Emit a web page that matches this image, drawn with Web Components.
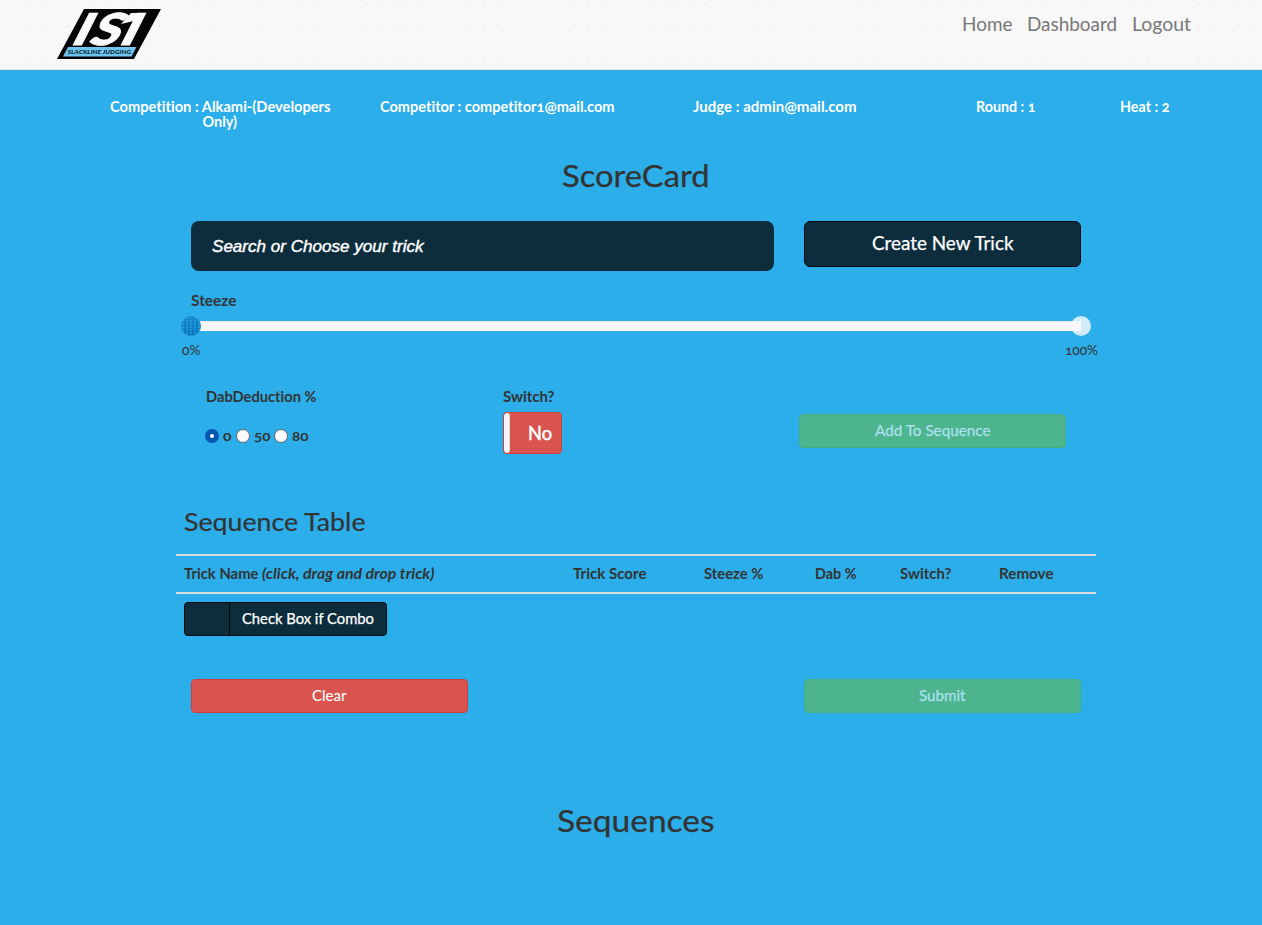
<!DOCTYPE html>
<html lang="en">
<head>
<meta charset="utf-8">
<title>ScoreCard</title>
<style>
body{margin:0;background:#2baee9;font-family:Lato,"Liberation Sans",sans-serif;font-size:14px;line-height:20px;color:#333;font-variant-numeric:oldstyle-nums;font-variant-ligatures:none}
</style>
</head>
<body>
<score-app></score-app>
<script>
function define(name, html, init) {
  const tpl = document.createElement('template');
  tpl.innerHTML = html;
  customElements.define(name, class extends HTMLElement {
    connectedCallback() {
      if (this.shadowRoot) return;
      this.attachShadow({ mode: 'open' }).append(tpl.content.cloneNode(true));
      if (init) init.call(this, this.shadowRoot);
    }
  });
}

/* A run of text widened so that it fills the width given in "w". */
define('track-text', `<style>:host{display:inline-block;white-space:nowrap;text-align:left}span{display:inline-block;font-size:1.03em;transform-origin:0 50%}</style><span><slot></slot></span>`, function (root) {
  const s = root.querySelector('span');
  const w = Number(this.getAttribute('w')) - 0.5;
  const own = s.getBoundingClientRect().width;
  s.style.transform = 'translateY(.4px) scaleX(' + w / own + ')';
  s.style.marginRight = (w - own) + 'px';
});

define('isi-logo', `<style>:host{display:block;width:104px;height:51px}svg{display:block;overflow:visible}
text{font-family:Lato,sans-serif;font-weight:900}</style>
<svg width="104" height="51" viewBox="57 8 104 51">
<path d="M84 9h77l-27 50H57z" fill="#030506"/>
<path d="M68 47h68.5l-5 9.5H63z" fill="#6ec6f0"/>
<g fill="#fafafa" stroke="#fafafa" stroke-width=".8" font-size="44" transform="translate(0 45.2) skewX(-27)">
<text transform="translate(69 0) scale(1.25 1)">I</text>
<text transform="translate(87 0) scale(1.2 1)">S</text>
<text transform="translate(117 0) scale(1.25 1)">I</text></g>
<path d="M131 13h12l-5 7-17 4z" fill="#fafafa"/>
<text x="67.5" y="54.2" font-size="6.4" font-style="italic" fill="#0a2733" textLength="63.5" lengthAdjust="spacingAndGlyphs">SLACKLINE JUDGING</text>
</svg>`);

define('top-bar', `<style>
:host{display:flex;justify-content:space-between;box-sizing:border-box;height:70px;padding:8px 71px 0 57px;border-bottom:1px solid #e7e7e7;
background:radial-gradient(circle at 3px 4px,#ededf6 .6px,transparent 1px) 0 0/13px 11px,radial-gradient(circle at 5px 2px,#f3f2ee .6px,transparent 1px) 4px 3px/17px 13px,#f8f8f8}
nav{display:flex;gap:15px;padding-top:6px;font-size:18px;color:#777}
</style><isi-logo></isi-logo><nav><track-text w="51">Home</track-text><track-text w="90.5">Dashboard</track-text><track-text w="59.5">Logout</track-text></nav>`);

define('info-bar', `<style>
:host{display:grid;grid-template-columns:3fr 3fr 3fr 2fr 1fr;width:1110px;margin-left:81px;padding-top:29px;height:46px;text-align:center;color:#fff;font-weight:700;font-size:14px;line-height:15px}
</style><div><track-text w="221">Competition : Alkami-(Developers</track-text><br><track-text w="35">Only)</track-text></div>
<div><track-text w="235">Competitor : competitor1@mail.com</track-text></div>
<div><track-text w="164">Judge : admin@mail.com</track-text></div>
<div><track-text w="60">Round : 1</track-text></div>
<div><track-text w="50">Heat : 2</track-text></div>`);

define('action-button', `<style>
:host{display:flex;align-items:center;justify-content:center;box-sizing:border-box;height:34px;border:1px solid;border-radius:4px;color:#fff;-webkit-text-stroke:.25px;font-size:14px}
:host([kind=dark]){background:#0d2d3d;border-color:#02090d}
:host([kind=danger]){background:#d9534f;border-color:#d43f3a;-webkit-text-stroke:.1px}
:host([kind=success]){background:#4db58e;border-color:#45ad80;color:#ace0ee}
:host([size=large]){height:46px;font-size:18px;border-radius:6px;padding-bottom:2px}
</style><slot></slot>`);

define('percent-slider', `<style>
:host{display:block}
.track{position:relative;height:10px;background:#f7f7f7;box-shadow:inset 0 1px 1px #e8e8e8}
i{position:absolute;top:-5px;width:20px;height:20px;border-radius:50%}
.a{left:-10px;background:radial-gradient(circle at 2px 2px,#35a3e0 .5px,transparent 1px) 0 0/4px 3px,linear-gradient(#168bd0,#0777bd)}
.b{right:-10px;background:rgba(246,249,252,.82)}
.lab{display:flex;justify-content:space-between;margin:9px -16.5px 0 -9px;font-size:13px;line-height:20px}
</style><div class="track"><i class="a"></i><i class="b"></i></div>
<div class="lab"><track-text w="19">0%</track-text><track-text w="33.5">100%</track-text></div>`);

define('radio-dot', `<style>
:host{display:block;box-sizing:border-box;width:14px;height:14px;border-radius:50%;background:#fafafa;border:1px solid #666}
:host([on]){border:5px solid #0757b0;background:#fff}
</style>`);

define('radio-set', `<style>:host{display:flex;align-items:center;gap:4px;font-weight:700;font-size:13px}</style>
<radio-dot on></radio-dot><track-text w="9">0</track-text><radio-dot></radio-dot><track-text w="17">50</track-text><radio-dot></radio-dot><track-text w="17">80</track-text>`);

define('toggle-switch', `<style>:host{display:flex;box-sizing:border-box;width:59px;height:42px;border:1px solid #d43f3a;border-radius:4px;background:#d9534f;color:#fff;overflow:hidden;font-size:18px;line-height:41px;-webkit-text-stroke:.5px}
i{width:5px;background:#f6f6f6;border-right:1px solid #ddd;border-radius:3px;margin-right:18px}</style><i></i><track-text w="24.5">No</track-text>`);

define('combo-check', `<style>:host{display:flex;box-sizing:border-box;width:203px;height:34px;border:1px solid #02090d;border-radius:4px;background:#0d2d3d;color:#fff;line-height:32px;-webkit-text-stroke:.25px}
i{width:44px;border-right:1px solid #02090d;margin-right:12px}</style><i></i><track-text w="132.5">Check Box if Combo</track-text>`);

define('sequence-table', `<style>
:host{display:block}
h3{margin:0 0 18px 8px;font-weight:400;font-size:24px;line-height:28px;-webkit-text-stroke:.2px}
.head{display:grid;grid-template-columns:389px 131px 111px 85px 99px 105px;box-sizing:border-box;height:40px;border:solid #ddd;border-width:2px 0;align-items:center;font-weight:700}
.head>*{margin-left:8px;justify-self:start}
.row{padding:8px}
</style><h3><track-text w="182">Sequence Table</track-text></h3>
<div class="head"><div><track-text w="75">Trick Name</track-text> <track-text w="173" style="font-style:italic">(click, drag and drop trick)</track-text></div>
<track-text w="74">Trick Score</track-text><track-text w="60">Steeze %</track-text><track-text w="42">Dab %</track-text><track-text w="52">Switch?</track-text><track-text w="55">Remove</track-text></div>
<div class="row"><combo-check></combo-check></div>`);

define('score-app', `<style>
:host{display:block;height:925px;overflow:hidden}
main{width:920px;margin-left:176px}
h2{margin:0;text-align:center;font-weight:400;font-size:30px;line-height:33px;-webkit-text-stroke:.25px}
.pick{display:grid;grid-template-columns:583px 277px;gap:30px;align-items:start;padding:29px 15px 0}
.search{height:50px;box-sizing:border-box;border-radius:8px;background:#0d2d3d;color:#fff;padding-left:20.5px;font:italic 16px/50px "Liberation Sans",sans-serif;-webkit-text-stroke:.4px}
.steeze{padding:20px 15px 0}
b{display:block;line-height:20px}
.opts{display:grid;grid-template-columns:297px 296px 267px;padding:27px 30px 0;height:68px}
radio-set{margin-top:19px;margin-left:-1px}
toggle-switch{margin-top:5px}
.opts action-button{margin-top:27px}
sequence-table{margin-top:53px}
.end{display:grid;grid-template-columns:277px 277px;justify-content:space-between;padding:35px 15px 0}
.seq{margin-top:91px}
</style>
<top-bar></top-bar><info-bar></info-bar>
<main>
<h2 style="margin-top:14px"><track-text w="148">ScoreCard</track-text></h2>
<div class="pick"><div class="search"><track-text w="212">Search or Choose your trick</track-text></div>
<action-button kind="dark" size="large"><track-text w="142">Create New Trick</track-text></action-button></div>
<div class="steeze"><b><track-text w="46">Steeze</track-text></b><percent-slider style="margin-top:10px"></percent-slider></div>
<div class="opts"><div><b><track-text w="111">DabDeduction %</track-text></b><radio-set></radio-set></div>
<div><b><track-text w="52">Switch?</track-text></b><toggle-switch></toggle-switch></div>
<action-button kind="success"><track-text w="116">Add To Sequence</track-text></action-button></div>
<sequence-table></sequence-table>
<div class="end"><action-button kind="danger"><track-text w="35">Clear</track-text></action-button><action-button kind="success"><track-text w="47">Submit</track-text></action-button></div>
<h2 class="seq"><track-text w="158">Sequences</track-text></h2>
</main>`);
</script>
</body>
</html>
